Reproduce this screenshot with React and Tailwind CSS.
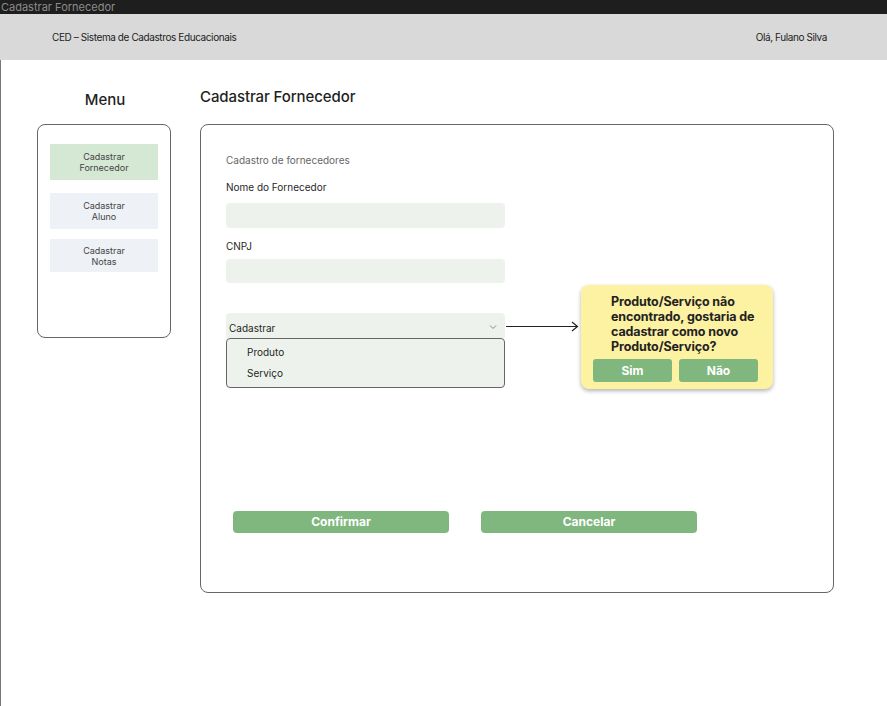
import React from "react";

const menu = [
    { label: ["Cadastrar", "Fornecedor"], active: true, h: "h-[36px]", mt: "mt-[18px]" },
    { label: ["Cadastrar", "Aluno"], active: false, h: "h-[36px]", mt: "mt-[13px]" },
    { label: ["Cadastrar", "Notas"], active: false, h: "h-[33px]", mt: "mt-[10px]" },
];

export default function App() {
    return (
        <div className="min-h-[706px] w-[887px] bg-white text-[#1f1f1f] font-['Inter','Liberation_Sans',sans-serif]">
            <div className="h-[14px] bg-[#1e1e1e] text-[11px] leading-[14px] text-[#8c8c8c] pl-[1px]">
                Cadastrar Fornecedor
            </div>

            <header className="h-[46px] bg-[#d9d9d9] flex items-center justify-between pl-[52px] pr-[60px] text-[10px] tracking-[-0.4px] text-[#222]">
                <span>CED – Sistema de Cadastros Educacionais</span>
                <span>Olá, Fulano Silva</span>
            </header>

            <div className="border-l border-[#777] min-h-[646px] flex pl-[36px]">
                <aside className="w-[134px]">
                    <h2 className="pt-[30px] mb-[14px] pl-[2px] text-[15px] leading-[20px] text-center font-medium">Menu</h2>
                    <div className="h-[214px] rounded-[8px] border border-[#666] px-[12px] pt-px">
                        {menu.map((m) => (
                            <div
                                key={m.label[1]}
                                className={`${m.h} ${m.mt} flex flex-col items-center justify-center text-[9px] leading-[11px] text-[#444] ${
                                    m.active ? "bg-[#d5e8d4]" : "bg-[#eef1f5]"
                                }`}
                            >
                                <span>{m.label[0]}</span>
                                <span>{m.label[1]}</span>
                            </div>
                        ))}
                    </div>
                </aside>

                <section className="ml-[29px] w-[634px]">
                    <h1 className="pt-[27px] mb-[17px] text-[15px] leading-[20px] font-medium tracking-[-0.1px]">Cadastrar Fornecedor</h1>
                    <div className="h-[469px] rounded-[8px] border border-[#666] pl-[25px] pt-[28px]">
                        <p className="text-[10px] leading-[14px] text-[#666]">Cadastro de fornecedores</p>
                        <p className="mt-[13px] text-[10px] leading-[14px]">Nome do Fornecedor</p>
                        <div className="mt-[9px] h-[25px] w-[279px] rounded-[4px] bg-[#edf3ec]" />
                        <p className="mt-[11px] text-[10px] leading-[14px]">CNPJ</p>
                        <div className="mt-[6px] h-[24px] w-[279px] rounded-[4px] bg-[#edf3ec]" />

                        <div className="relative mt-[30px] w-[279px]">
                            <div className="h-[25px] rounded-t-[4px] bg-[#edf3ec] flex items-end justify-between pl-[3px] pr-[8px] pb-[3px] text-[10px] leading-[14px]">
                                <span>Cadastrar</span>
                                <svg width="8" height="6" viewBox="0 0 8 6" className="mb-[5px]">
                                    <path d="M1 1.5 L4 4.5 L7 1.5" fill="none" stroke="#888" strokeWidth="1" />
                                </svg>
                            </div>
                            <div className="h-[50px] rounded-[4px] border border-[#666] bg-[#edf3ec] pl-[20px] pt-[3px] text-[10px] leading-[21px]">
                                <div>Produto</div>
                                <div>Serviço</div>
                            </div>

                            <svg className="absolute left-[280px] top-[7px]" width="73" height="12" viewBox="0 0 73 12">
                                <path d="M0 6.5 H71" stroke="#222" strokeWidth="1.2" />
                                <path d="M66 2 L71.5 6.5 L66 11" fill="none" stroke="#222" strokeWidth="1.2" />
                            </svg>

                            <div className="absolute left-[355px] top-[-28px] w-[192px] rounded-[8px] bg-[#fdf1a2] shadow-[0_2px_4px_rgba(0,0,0,0.3)] pt-[9px] pb-[7px]">
                                <p className="pl-[30px] text-[12.5px] tracking-[-0.1px] leading-[15px] font-bold whitespace-nowrap text-[#222]">
                                    Produto/Serviço não
                                    <br />
                                    encontrado, gostaria de
                                    <br />
                                    cadastrar como novo
                                    <br />
                                    Produto/Serviço?
                                </p>
                                <div className="mt-[5px] flex gap-[7px] pl-[12px]">
                                    <button className="h-[23px] w-[79px] rounded-[3px] bg-[#80b77f] text-white text-[12px] font-bold">Sim</button>
                                    <button className="h-[23px] w-[79px] rounded-[3px] bg-[#80b77f] text-white text-[12px] font-bold">Não</button>
                                </div>
                            </div>
                        </div>

                        <div className="mt-[123px] ml-[7px] flex gap-[32px]">
                            <button className="h-[22px] w-[216px] rounded-[4px] bg-[#80b77f] text-white text-[12px] font-bold">Confirmar</button>
                            <button className="h-[22px] w-[216px] rounded-[4px] bg-[#80b77f] text-white text-[12px] font-bold">Cancelar</button>
                        </div>
                    </div>
                </section>
            </div>
        </div>
    );
}
